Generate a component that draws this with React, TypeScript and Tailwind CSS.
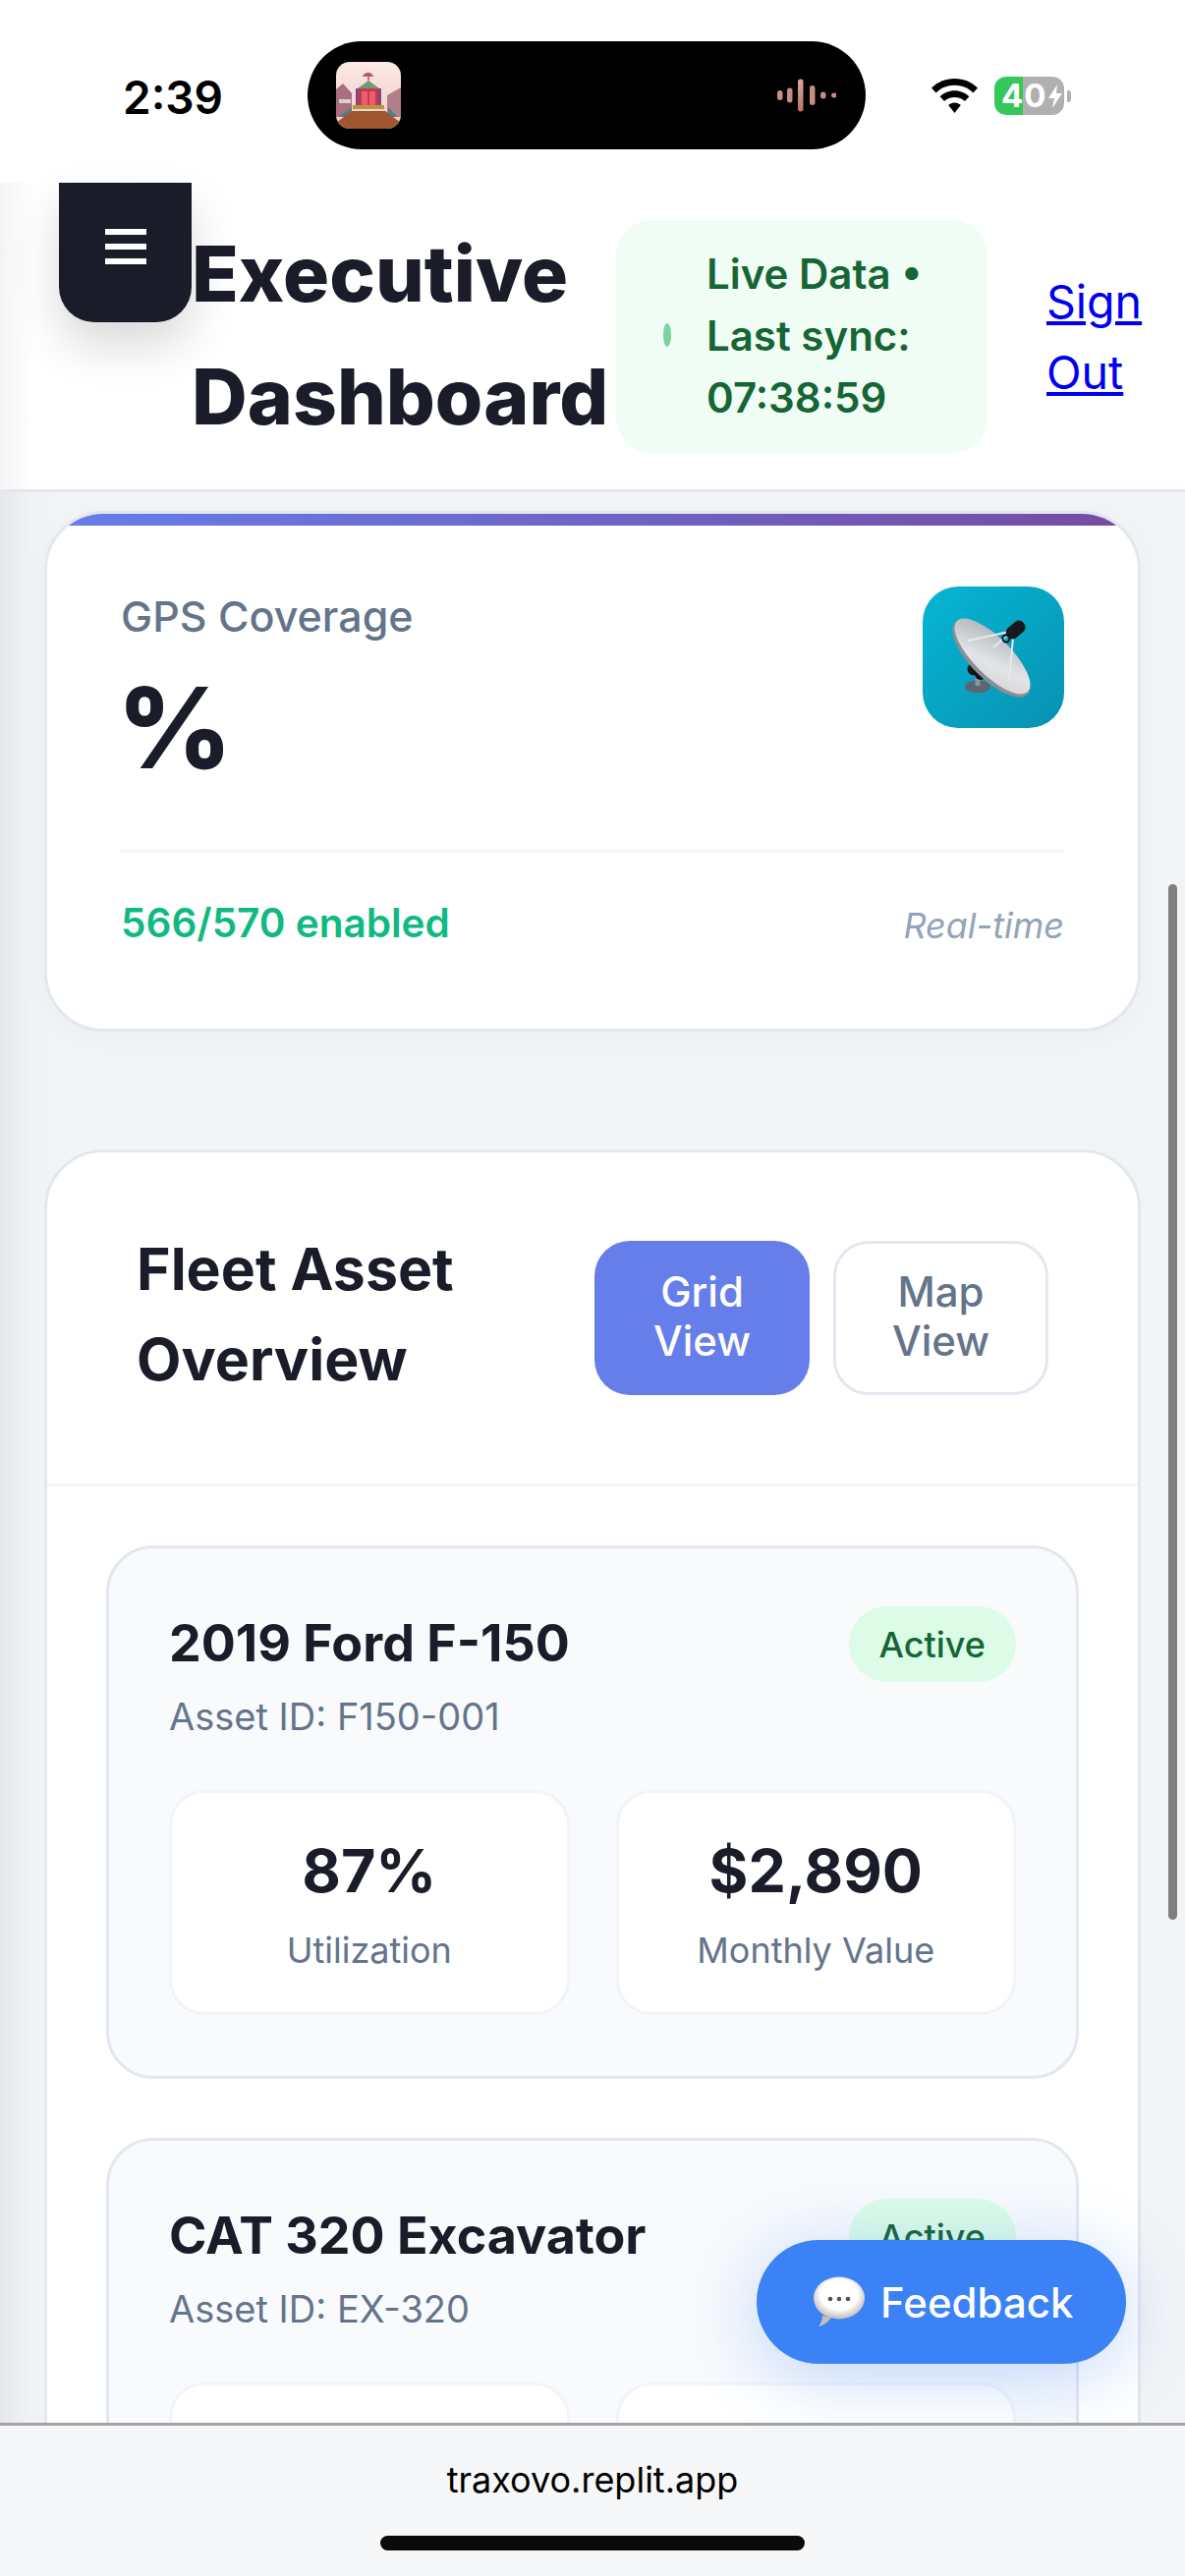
const assets = [
  { name: "2019 Ford F-150", id: "F150-001", utilization: "87%", value: "$2,890" },
  { name: "CAT 320 Excavator", id: "EX-320" },
];

type Asset = { name: string; id: string; utilization?: string; value?: string };

function AppThumb() {
  return (
    <svg viewBox="0 0 66 68" className="w-[66px] h-[68px] rounded-[14px]">
      <defs>
        <linearGradient id="sky" x1="0" y1="0" x2="0" y2="1">
          <stop offset="0" stopColor="#fbeae6" />
          <stop offset="1" stopColor="#f3c9c6" />
        </linearGradient>
      </defs>
      <rect width="66" height="68" fill="url(#sky)" />
      <path d="M0 28 L7 22 L16 32 V56 H0 Z" fill="#a8707e" />
      <path d="M66 26 L52 34 V56 H66 Z" fill="#b08088" />
      <rect x="3" y="38" width="12" height="4" fill="#d9d0d4" />
      <path d="M3 56 L16 46 V56 Z" fill="#4c7f86" />
      <path d="M63 56 L53 46 V56 Z" fill="#4c7f86" />
      <path d="M22 27 L33 19 L44 27 Z" fill="#6f9a78" />
      <rect x="20" y="27" width="26" height="19" fill="#c23a4e" />
      <rect x="20" y="27" width="3" height="19" fill="#7c4a7e" />
      <rect x="43" y="27" width="3" height="19" fill="#7c4a7e" />
      <rect x="26" y="30" width="6" height="15" fill="#ef5a6c" />
      <rect x="34" y="30" width="6" height="15" fill="#ef5a6c" />
      <path d="M33 19 V13 M28 14 Q33 9 37 14 Z" stroke="#b8495a" strokeWidth="1.4" fill="#c9606c" />
      <rect x="17" y="44" width="32" height="4" fill="#b9943c" />
      <path d="M0 68 V62 L16 50 H50 L66 62 V68 Z" fill="#a0562f" />
    </svg>
  );
}

function WaveBars() {
  const bars = [
    { x: 0, h: 10 },
    { x: 10, h: 15 },
    { x: 21, h: 33 },
    { x: 33, h: 20 },
    { x: 44, h: 7 },
    { x: 55, h: 5 },
  ];
  return (
    <svg viewBox="0 0 60 34" className="w-[60px] h-[34px]">
      <defs>
        <linearGradient id="wave" x1="0" y1="0" x2="0" y2="1">
          <stop offset="0" stopColor="#d9a79f" />
          <stop offset="1" stopColor="#b9736b" />
        </linearGradient>
      </defs>
      {bars.map((b) => (
        <rect key={b.x} x={b.x} y={17 - b.h / 2} width="5.5" height={b.h} rx="2.7" fill={b.x === 21 ? "url(#wave)" : "#c78d85"} />
      ))}
    </svg>
  );
}

function Wifi() {
  return (
    <svg viewBox="0 0 47 35" className="w-[47px] h-[35px]">
      <path d="M23.5 0 C33 0 41 3.6 47 9.6 L42.4 14.4 C37.6 9.6 31 6.8 23.5 6.8 C16 6.8 9.4 9.6 4.6 14.4 L0 9.6 C6 3.6 14 0 23.5 0 Z" />
      <path d="M23.5 12.2 C29.4 12.2 34.6 14.5 38.4 18.3 L33.9 23 C31.2 20.4 27.6 18.9 23.5 18.9 C19.4 18.9 15.8 20.4 13.1 23 L8.6 18.3 C12.4 14.5 17.6 12.2 23.5 12.2 Z" />
      <path d="M23.5 24.4 C26 24.4 28.1 25.3 29.8 26.9 L23.5 35 L17.2 26.9 C18.9 25.3 21 24.4 23.5 24.4 Z" />
    </svg>
  );
}

function Battery() {
  return (
    <div className="flex items-center gap-[3px]">
      <div className="w-[71px] h-[39px] rounded-[12px] bg-[linear-gradient(90deg,#34c759_0,#34c759_29px,#b0b0b0_29px)] flex items-center pl-[7px] text-white">
        <span className="text-[33px] leading-none font-bold tracking-[1px]">40</span>
        <svg viewBox="0 0 14 24" className="w-[14px] h-[24px] ml-[1px]" fill="#fff">
          <path d="M9 0 L0 14 H6 L4 24 L14 9 H8 Z" />
        </svg>
      </div>
      <div className="w-[4px] h-[12px] rounded-r-[3px] bg-[#b0b0b0]" />
    </div>
  );
}

function SatelliteDish() {
  return (
    <svg viewBox="0 0 144 144" className="w-[144px] h-[144px]">
      <defs>
        <linearGradient id="dish" x1="0" y1="0" x2="1" y2="1">
          <stop offset="0" stopColor="#a9acb1" />
          <stop offset="0.6" stopColor="#e3e4e8" />
          <stop offset="1" stopColor="#d2d3d7" />
        </linearGradient>
      </defs>
      <ellipse cx="56" cy="102" rx="13" ry="6.5" fill="#5d6570" />
      <rect x="53.5" y="90" width="5" height="11" fill="#8d939b" />
      <circle cx="52" cy="84" r="6.5" fill="#15161a" />
      <circle cx="59" cy="89" r="6" fill="#0f1013" />
      <circle cx="66" cy="91" r="5" fill="#23252a" />
      <ellipse cx="70" cy="73" rx="52" ry="21" transform="rotate(45 70 73)" fill="#8b8e94" />
      <ellipse cx="71" cy="71" rx="51" ry="19" transform="rotate(45 71 71)" fill="url(#dish)" />
      <path d="M46 55 L88 46 M72 62 L88 48 M92 52 L88 96" stroke="#e8e9ec" strokeWidth="2" fill="none" />
      <rect x="84" y="38" width="21" height="13" rx="5.5" transform="rotate(-40 94 44)" fill="#17181c" />
      <circle cx="85" cy="53" r="3.5" fill="none" stroke="#15161a" strokeWidth="2" />
    </svg>
  );
}

function SpeechBubble() {
  return (
    <svg viewBox="0 0 52 52" className="w-[52px] h-[52px] shrink-0">
      <defs>
        <radialGradient id="bubble" cx="0.5" cy="0.42" r="0.6">
          <stop offset="0.6" stopColor="#ffffff" />
          <stop offset="1" stopColor="#b9b4ae" />
        </radialGradient>
      </defs>
      <path d="M5 51 C8 47 9 44 9 40 L18 42 C14 47 10 50 5 51 Z" fill="#c5c0ba" />
      <ellipse cx="26" cy="22" rx="26" ry="21.5" fill="url(#bubble)" />
      <circle cx="17" cy="23" r="2.3" fill="#55514e" />
      <circle cx="26" cy="23" r="2.3" fill="#55514e" />
      <circle cx="35" cy="23" r="2.3" fill="#55514e" />
    </svg>
  );
}

function StatTile({ value, label }: { value?: string; label: string }) {
  return (
    <div className="h-[229px] rounded-[36px] bg-white border-[3px] border-[#f1f5f9] flex flex-col items-center pt-[43px]">
      {value && (
        <>
          <span className="text-[61px] leading-[72px] font-bold text-[#1a1d29]">{value}</span>
          <span className="mt-[20px] text-[36px] leading-[50px] text-[#64748b]">{label}</span>
        </>
      )}
    </div>
  );
}

function AssetCard({ asset }: { asset: Asset }) {
  return (
    <div className="border-[3px] border-[#e2e8f0] bg-[#f8fafc] rounded-[48px] pt-[59px] px-[61px] pb-[62px] shrink-0">
      <div className="flex items-start justify-between">
        <div>
          <h3 className="mt-[13px] text-[52px] leading-[50px] font-bold text-[#1a1d29]">{asset.name}</h3>
          <p className="mt-[24px] text-[38px] leading-[50px] text-[#64748b]">Asset ID: {asset.id}</p>
        </div>
        <span className="h-[77px] px-[31px] flex items-center rounded-full bg-[#dcfce7] text-[#166534] text-[36px] font-medium">
          Active
        </span>
      </div>
      <div className="grid grid-cols-2 gap-[47px] mt-[50px]">
        <StatTile value={asset.utilization} label="Utilization" />
        <StatTile value={asset.value} label="Monthly Value" />
      </div>
    </div>
  );
}

export default function App() {
  return (
    <div className="relative w-[1206px] h-[2622px] overflow-hidden flex flex-col bg-[#f3f4f7] font-['Inter',sans-serif]">
      {/* status bar */}
      <div className="h-[186px] shrink-0 bg-white flex items-start text-black">
        <span className="ml-[125px] mt-[70px] w-[101px] text-[46px] leading-[58px] font-semibold">2:39</span>
        <div className="ml-[87px] mt-[42px] w-[568px] h-[110px] rounded-full bg-black flex items-center justify-between pl-[29px] pr-[30px]">
          <AppThumb />
          <WaveBars />
        </div>
        <div className="ml-[67px] mt-[78px] flex items-center gap-[17px]">
          <Wifi />
          <Battery />
        </div>
      </div>

      {/* header */}
      <header className="h-[315px] shrink-0 bg-[linear-gradient(90deg,#f4f4f5_0,#ffffff_36px)] border-b-[3px] border-[#e2e8f0] flex items-start pl-[195px]">
        <h1 className="w-[432px] mt-[30px] text-[78.5px] leading-[125px] font-extrabold text-[#1a1d29]">Executive Dashboard</h1>
        <div className="mt-[38px] h-[237px] w-[378px] rounded-[36px] bg-[#f0fdf4] flex items-center pl-[48px] pb-[3px] shrink-0">
          <span className="w-[8px] h-[24px] rounded-[50%] bg-[#7dd3a0] shrink-0" />
          <span className="ml-[36px] w-[250px] text-[42px] leading-[63px] font-semibold text-[#166534]">
            Live Data • Last sync: 07:38:59
          </span>
        </div>
        <a href="#" className="ml-[60px] mt-[85px] w-[100px] text-[46.5px] leading-[72px] text-[#0000ee] underline">
          Sign Out
        </a>
      </header>

      {/* page content */}
      <main className="flex-1 min-h-0 overflow-hidden px-[45px] pt-[19px] bg-[linear-gradient(90deg,#e6e7e9_0,#f1f2f4_30px,#f3f4f6_60px)]">
        <section className="h-[530px] rounded-[60px] bg-white border-[3px] border-[#e2e8f0] overflow-hidden shadow-[0_6px_30px_rgba(0,0,0,0.03)]">
          <div className="h-[12px] bg-[linear-gradient(90deg,#667eea,#764ba2)]" />
          <div className="px-[75px] pt-[62px]">
            <div className="flex items-start justify-between h-[271px] border-b-[3px] border-[#f1f5f9]">
              <div>
                <p className="text-[43px] leading-[50px] font-medium text-[#64748b] mt-[5px]">GPS Coverage</p>
                <p className="-ml-[4px] mt-[21px] text-[114px] leading-[135px] font-extrabold text-[#1a1d29]">%</p>
              </div>
              <div className="w-[144px] h-[144px] rounded-[36px] bg-[linear-gradient(135deg,#06b6d4,#0891b2)]">
                <SatelliteDish />
              </div>
            </div>
            <div className="flex items-center justify-between mt-[45px]">
              <span className="text-[40.5px] leading-[50px] font-semibold text-[#10b981]">566/570 enabled</span>
              <span className="mt-[4px] text-[36px] leading-[50px] italic text-[#94a3b8]">Real-time</span>
            </div>
          </div>
        </section>

        <section className="mt-[120px] rounded-[60px] bg-white border-[3px] border-[#e2e8f0] h-[1400px] overflow-hidden">
          <div className="h-[340px] border-b-[3px] border-[#f1f5f9] flex items-start pl-[91px] pt-[73px]">
            <h2 className="w-[466px] text-[59px] leading-[92px] font-bold text-[#1a1d29]">
              Fleet Asset
              <br />
              Overview
            </h2>
            <div className="flex gap-[24px] mt-[17px]">
              <button className="w-[219px] h-[157px] rounded-[36px] bg-[#667eea] text-white text-[42px] leading-[50px] font-medium px-[40px] pb-[3px]">
                Grid View
              </button>
              <button className="w-[219px] h-[157px] rounded-[36px] bg-white border-[3px] border-[#e2e8f0] text-[#64748b] text-[42px] leading-[50px] font-medium px-[40px] pb-[3px]">
                Map View
              </button>
            </div>
          </div>
          <div className="px-[60px] pt-[60px] flex flex-col gap-[60px]">
            {assets.map((asset) => (
              <AssetCard key={asset.id} asset={asset} />
            ))}
          </div>
        </section>
      </main>

      {/* safari bottom bar */}
      <footer className="h-[156px] shrink-0 bg-[#f6f7f9] border-t-[3px] border-[#a3a3a6] flex flex-col items-center">
        <span className="mt-[30px] text-[36px] leading-[50px] text-black">traxovo.replit.app</span>
        <div className="mt-[32px] w-[432px] h-[15px] rounded-full bg-[#0a0a0a]" />
      </footer>

      {/* overlays */}
      <button className="absolute left-[60px] top-[186px] w-[135px] h-[142px] rounded-b-[36px] bg-[#1a1d29] shadow-[0_24px_48px_rgba(0,0,0,0.15)] flex flex-col items-center justify-center gap-[9px] pb-[12px]">
        <span className="w-[42px] h-[6px] bg-white" />
        <span className="w-[42px] h-[6px] bg-white" />
        <span className="w-[42px] h-[6px] bg-white" />
      </button>
      <div className="absolute left-[1189px] top-[900px] w-[9px] h-[1054px] rounded-full bg-[#7f7f7f]" />
      <button className="absolute left-[770px] top-[2280px] w-[376px] h-[126px] rounded-full bg-[#3b82f6] shadow-[0_12px_72px_rgba(59,130,246,0.3)] flex items-center pl-[58px] gap-[16px] text-white text-[42px] font-medium">
        <SpeechBubble />
        Feedback
      </button>
    </div>
  );
}
